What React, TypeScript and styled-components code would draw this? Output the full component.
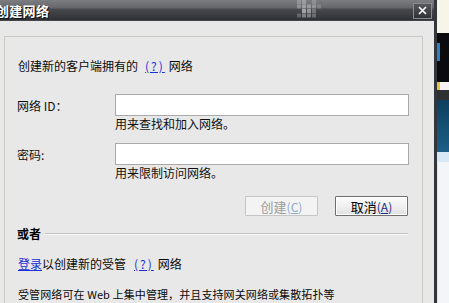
import React from "react";
import styled, { createGlobalStyle } from "styled-components";

const GlobalStyle = createGlobalStyle`
  html, body {
    margin: 0;
    padding: 0;
    background: #e8e8e8;
    overflow: hidden;
  }
  body {
    font-family: "Noto Sans CJK SC", "Noto Sans", sans-serif;
  }
`;

const Screen = styled.div`
  width: 449px;
  height: 303px;
  display: flex;
  overflow: hidden;
`;

const Dialog = styled.div`
  width: 434px;
  display: flex;
  flex-direction: column;
`;

const TitleBar = styled.div`
  position: relative;
  height: 21px;
  flex: none;
  display: flex;
  align-items: center;
  background: linear-gradient(#7b7d81 0%, #66686c 35%, #47494e 45%, #2f3135 95%, #55575b 100%);
`;

const Title = styled.div`
  margin-left: -4px;
  color: #fff;
  font-size: 13px;
  font-weight: 700;
  letter-spacing: 0.3px;
  text-shadow: 1px 1px 0 #111;
`;

const Ornament = styled.svg`
  position: absolute;
  left: 297px;
  top: 0;
`;

const CloseButton = styled.div`
  margin-left: auto;
  margin-right: 2px;
  width: 17px;
  height: 14px;
  border: 1px solid #8a8c90;
  background: linear-gradient(#55575b, #303236);
  display: flex;
  align-items: center;
  justify-content: center;
`;

const Body = styled.div`
  flex: 1;
  background: #e8e8e8;
  padding: 15px 11px 0 4px;
  display: flex;
`;

const Panel = styled.div`
  flex: 1;
  border: 1px solid #cacac4;
  border-bottom: none;
  padding: 0 13px 0 12px;
  display: flex;
  flex-direction: column;
  color: #000;
`;

const Line = styled.div<{ $top: number; $size?: number; $spacing?: number }>`
  margin-top: ${(p) => p.$top}px;
  font-size: ${(p) => p.$size ?? 12}px;
  letter-spacing: ${(p) => p.$spacing ?? 0}px;
  line-height: 14px;
  white-space: nowrap;
  color: #0a0a0a;
  padding-left: 1px;
`;

const Link = styled.span`
  color: #1c2fd6;
  text-decoration: underline;
`;

const Help = styled(Link)<{ $before: number }>`
  margin: 0 4px 0 ${(p) => p.$before}px;
  letter-spacing: 2px;
`;

const FieldRow = styled.div<{ $top: number }>`
  margin-top: ${(p) => p.$top}px;
  display: flex;
  align-items: flex-start;
`;

const Label = styled.div`
  width: 98px;
  flex: none;
  height: 22px;
  display: flex;
  align-items: center;
  font-size: 12px;
  color: #111;
`;

const Field = styled.div`
  flex: 1;
  display: flex;
  flex-direction: column;
`;

const Input = styled.div`
  height: 20px;
  background: #fff;
  border: 1px solid #a9a9a9;
`;

const Hint = styled.div`
  font-size: 12px;
  line-height: 16px;
  color: #111;
`;

const Buttons = styled.div`
  margin-top: 15px;
  display: flex;
  justify-content: flex-end;
  gap: 17px;
  padding-right: 1px;
`;

const Button = styled.div<{ $disabled?: boolean }>`
  width: 71px;
  height: 18px;
  display: flex;
  align-items: center;
  justify-content: center;
  font-size: 13px;
  border-radius: 1px;
  border: 1px solid ${(p) => (p.$disabled ? "#c6c6c6" : "#6f6f6f")};
  background: ${(p) =>
    p.$disabled ? "#f3f3f3" : "linear-gradient(#fbfbfb 0%, #f0f0f0 50%, #e0e0e0 100%)"};
  box-shadow: ${(p) => (p.$disabled ? "none" : "inset 0 0 0 1px #fff")};
  color: ${(p) => (p.$disabled ? "#9c9c9c" : "#000")};
`;

const Key = styled.span<{ $disabled?: boolean }>`
  color: ${(p) => (p.$disabled ? "#8fa9c8" : "#1a2a8a")};
  font-size: 12px;
  & u {
    text-decoration: underline;
  }
`;

const Divider = styled.div`
  margin-top: 11px;
  display: flex;
  align-items: center;
  gap: 4px;
  font-size: 12px;
  font-weight: 700;
  line-height: 14px;
  color: #000;
`;

const Rule = styled.div`
  flex: 1;
  border-top: 1px solid #c2c2c2;
  border-bottom: 1px solid #f6f6f6;
  margin-right: 1px;
`;

const Frame = styled.div`
  width: 3px;
  flex: none;
  background: #33363b;
`;

const Desktop = styled.div`
  flex: 1;
  display: flex;
  flex-direction: column;
`;

const Patch = styled.div<{ $h: number; $bg: string }>`
  height: ${(p) => p.$h}px;
  flex: none;
  background: ${(p) => p.$bg};
`;

const Tail = styled.div`
  flex: 1;
  background: #f3f6f9;
  border-left: 1px solid #d6e6f3;
`;

const ornament: [number, number, number][] = [
  [0, 0, 0.35], [1, 0, 0.45], [3, 0, 0.3],
  [0, 1, 0.4], [1, 1, 0.55], [2, 1, 0.5], [3, 1, 0.45], [4, 1, 0.25],
  [1, 2, 0.7], [2, 2, 0.6], [3, 2, 0.35],
  [0, 3, 0.3], [1, 3, 0.5], [2, 3, 0.45], [3, 3, 0.35],
];

const App = () => (
  <>
    <GlobalStyle />
    <Screen>
      <Dialog>
        <TitleBar>
          <Title>创建网络</Title>
          <Ornament width="26" height="19" viewBox="0 0 26 19">
            {ornament.map(([c, r, o], i) => (
              <rect key={i} x={c * 5} y={r * 4.5} width="4" height="4" fill="#c8cace" opacity={o} />
            ))}
          </Ornament>
          <CloseButton>
            <svg width="9" height="9" viewBox="0 0 9 9">
              <path d="M1 1 L8 8 M8 1 L1 8" stroke="#fff" strokeWidth="1.7" />
            </svg>
          </CloseButton>
        </TitleBar>
        <Body>
          <Panel>
            <Line $top={22}>
              创建新的客户端拥有的<Help $before={7}>(?)</Help>网络
            </Line>
            <FieldRow $top={21}>
              <Label>网络 ID：</Label>
              <Field>
                <Input />
                <Hint>用来查找和加入网络。</Hint>
              </Field>
            </FieldRow>
            <FieldRow $top={11}>
              <Label>密码:</Label>
              <Field>
                <Input />
                <Hint>用来限制访问网络。</Hint>
              </Field>
            </FieldRow>
            <Buttons>
              <Button $disabled>
                创建<Key $disabled>(<u>C</u>)</Key>
              </Button>
              <Button>
                取消<Key>(<u>A</u>)</Key>
              </Button>
            </Buttons>
            <Divider>
              或者
              <Rule />
            </Divider>
            <Line $top={16}>
              <Link>登录</Link>以创建新的受管<Help $before={8}>(?)</Help>网络
            </Line>
            <Line $top={16} $size={11} $spacing={0.1}>
              受管网络可在 Web 上集中管理，并且支持网关网络或集散拓扑等
            </Line>
          </Panel>
        </Body>
      </Dialog>
      <Frame />
      <Desktop>
        <Patch $h={33} $bg="#f7f5ea" />
        <Patch $h={10} $bg="#0b0b0d" />
        <Patch $h={18} $bg="linear-gradient(90deg, #2f7fc0 0 3px, #0b0b0d 3px)" />
        <Patch $h={21} $bg="#0b0b0d" />
        <Patch $h={8} $bg="linear-gradient(90deg, #e8c040 0 3px, #f4f4f4 3px)" />
        <Patch $h={10} $bg="#2f3032" />
        <Patch $h={52} $bg="linear-gradient(#0e3f60, #1d5f86)" />
        <Patch $h={10} $bg="#d8e8f4" />
        <Tail />
      </Desktop>
    </Screen>
  </>
);

export default App;
